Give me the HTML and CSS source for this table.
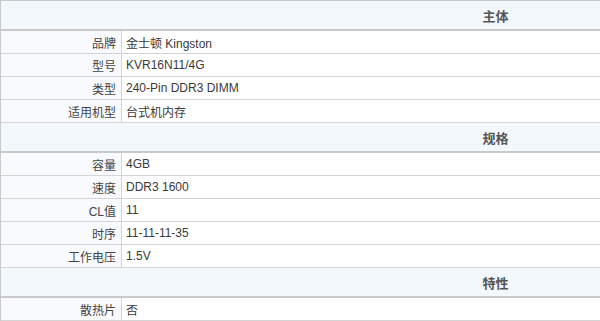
FILE: index.html
```html
<!DOCTYPE html>
<html>
<head>
<meta charset="utf-8">
<link rel="stylesheet" href="styles.css">
</head>
<body>
<table class="params">
  <tr><th class="sec" colspan="2">主体</th></tr>
  <tr><td class="lbl">品牌</td><td class="val">金士顿 Kingston</td></tr>
  <tr><td class="lbl">型号</td><td class="val">KVR16N11/4G</td></tr>
  <tr><td class="lbl">类型</td><td class="val">240-Pin DDR3 DIMM</td></tr>
  <tr><td class="lbl">适用机型</td><td class="val">台式机内存</td></tr>
  <tr><th class="sec" colspan="2">规格</th></tr>
  <tr><td class="lbl">容量</td><td class="val">4GB</td></tr>
  <tr><td class="lbl">速度</td><td class="val">DDR3 1600</td></tr>
  <tr><td class="lbl">CL值</td><td class="val">11</td></tr>
  <tr><td class="lbl">时序</td><td class="val">11-11-11-35</td></tr>
  <tr><td class="lbl">工作电压</td><td class="val">1.5V</td></tr>
  <tr><th class="sec" colspan="2">特性</th></tr>
  <tr><td class="lbl">散热片</td><td class="val">否</td></tr>
</table>
</body>
</html>
```
FILE: styles.css
```css
html, body {
  margin: 0;
  padding: 0;
  background: #ffffff;
}
.params {
  width: 100%;
  border-spacing: 0;
  border-top: 1px solid #c9c9c9;
  border-left: 1px solid #c9c9c9;
  font-family: "Liberation Sans", "Noto Sans CJK SC", sans-serif;
  font-size: 12px;
}
.sec {
  height: 28px;
  padding: 0 0 0 390px;
  background: #f3f8fd;
  border-bottom: 2px solid #c9c9c9;
  color: #555555;
  font-size: 13px;
  font-weight: bold;
  text-align: center;
  box-sizing: content-box;
}
.lbl, .val {
  height: 22px;
  padding: 0;
  border-bottom: 1px solid #d4d4d4;
  color: #444444;
  vertical-align: middle;
  box-sizing: content-box;
}
.lbl {
  width: 115px;
  padding-right: 5px;
  text-align: right;
  border-right: 1px solid #d4d4d4;
  background: #f8fafd;
}
.val {
  padding-left: 4px;
  text-align: left;
  color: #3a3a3a;
}
```
